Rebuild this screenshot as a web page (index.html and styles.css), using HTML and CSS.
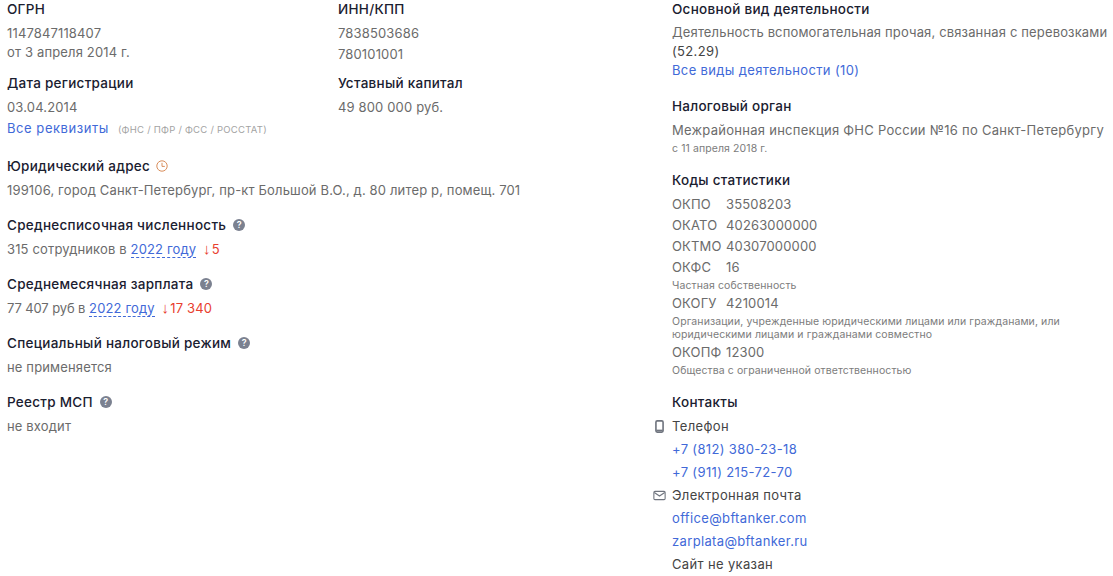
FILE: index.html
```
<!DOCTYPE html>
<html lang="ru">
<head>
<meta charset="utf-8">
<title>Реквизиты</title>
<link rel="stylesheet" href="styles.css">
</head>
<body>
<div class="page">
  <div class="left">
    <div class="pair">
      <div class="block col1">
        <h3>ОГРН</h3>
        <p>1147847118407</p>
        <p class="tight">от 3 апреля 2014 г.</p>
      </div>
      <div class="block">
        <h3>ИНН/КПП</h3>
        <p>7838503686</p>
        <p>780101001</p>
      </div>
    </div>
    <div class="pair">
      <div class="block col1">
        <h3>Дата регистрации</h3>
        <p>03.04.2014</p>
      </div>
      <div class="block">
        <h3>Уставный капитал</h3>
        <p>49 800 000 руб.</p>
      </div>
    </div>
    <p class="req"><a href="#">Все реквизиты</a><span class="srcs">(ФНС / ПФР / ФСС / РОССТАТ)</span></p>
    <div class="block">
      <h3>Юридический адрес<svg class="ico clock" viewBox="0 0 12 12"><circle cx="6" cy="6" r="5.2" fill="none" stroke="#d98e5c" stroke-width="1"/><path d="M6 2.8V6.4H8.8" fill="none" stroke="#d98e5c" stroke-width="1"/></svg></h3>
      <p>199106, город Санкт-Петербург, пр-кт Большой В.О., д. 80 литер р, помещ. 701</p>
    </div>
    <div class="block">
      <h3>Среднесписочная численность<span class="q">?</span></h3>
      <p>315 сотрудников в <a class="dash" href="#">2022 году</a> <span class="down"><span class="arr">↓</span>5</span></p>
    </div>
    <div class="block">
      <h3>Среднемесячная зарплата<span class="q">?</span></h3>
      <p><span class="narrow">77 407 руб в</span> <a class="dash" href="#">2022 году</a> <span class="down"><span class="arr">↓</span>17 340</span></p>
    </div>
    <div class="block">
      <h3>Специальный налоговый режим<span class="q">?</span></h3>
      <p>не применяется</p>
    </div>
    <div class="block">
      <h3>Реестр МСП<span class="q">?</span></h3>
      <p>не входит</p>
    </div>
  </div>
  <div class="right">
    <div class="block act">
      <h3>Основной вид деятельности</h3>
      <p>Деятельность вспомогательная прочая, связанная с перевозками</p>
      <p class="dark">(52.29)</p>
      <p><a href="#">Все виды деятельности (10)</a></p>
    </div>
    <div class="block">
      <h3>Налоговый орган</h3>
      <p class="wide">Межрайонная инспекция ФНС России №16 по Санкт-Петербургу</p>
      <small>с 11 апреля 2018 г.</small>
    </div>
    <div class="block">
      <h3>Коды статистики</h3>
      <p class="code"><span>ОКПО</span>35508203</p>
      <p class="code"><span>ОКАТО</span>40263000000</p>
      <p class="code"><span>ОКТМО</span>40307000000</p>
      <p class="code"><span>ОКФС</span>16</p>
      <small>Частная собственность</small>
      <p class="code"><span>ОКОГУ</span>4210014</p>
      <small class="wrap">Организации, учрежденные юридическими лицами или гражданами, или юридическими лицами и гражданами совместно</small>
      <p class="code"><span>ОКОПФ</span>12300</p>
      <small>Общества с ограниченной ответственностью</small>
    </div>
    <div class="block contacts">
      <h3>Контакты</h3>
      <p class="contact dark"><svg class="side" viewBox="0 0 12 12"><rect x="2.7" y="0.8" width="6.6" height="10.4" rx="1.2" fill="none" stroke="#70757f" stroke-width="1.5"/><path d="M3 9.6H9" stroke="#70757f" stroke-width="1.4"/></svg>Телефон</p>
      <p><a href="#">+7 (812) 380-23-18</a></p>
      <p><a href="#">+7 (911) 215-72-70</a></p>
      <p class="contact dark"><svg class="side" viewBox="0 0 12 12"><rect x="0.8" y="2.2" width="10.4" height="7.6" rx="1" fill="none" stroke="#70757f" stroke-width="1"/><path d="M1.2 3.2 6 6.5l4.8-3.3" fill="none" stroke="#70757f" stroke-width="1"/></svg>Электронная почта</p>
      <p><a href="#">office@bftanker.com</a></p>
      <p><a href="#">zarplata@bftanker.ru</a></p>
      <p class="dark">Сайт не указан</p>
    </div>
  </div>
</div>
</body>
</html>
```
FILE: styles.css
```
* { box-sizing: border-box; }
html, body { height: 576px; overflow: hidden; }
body { margin: 0; background: #fff; font-family: Inter, Roboto, "Noto Sans", sans-serif; font-size: 13px; letter-spacing: .15px; color: #6b6b6b; }
.page { display: flex; padding-left: 7px; }
.left { width: 665px; }
.right { width: 436px; }
.pair { display: flex; }
.pair .block { margin-bottom: 9px; }
.pair + .pair .block { margin-bottom: 0; }
.col1 { width: 331px; flex: none; }
.block { margin-bottom: 15px; }
.right .block { margin-bottom: 16px; }
h3 { display: flex; align-items: center; height: 18px; margin: 0 0 5px; font-size: 13.5px; font-weight: 500; letter-spacing: .27px; color: #1a2030; line-height: 18px; }
p { margin: 0; line-height: 21px; }
.tight { line-height: 17px; }
.wide { letter-spacing: .27px; }
.act { padding-bottom: 1px; }
.act p { line-height: 19px; }
a { color: #4169d8; text-decoration: none; letter-spacing: .35px; }
a.dash { border-bottom: 1px dashed #4169d8; letter-spacing: .15px; }
.narrow { letter-spacing: -.12px; }
.down { color: #e8402f; margin-left: 3px; }
.arr { font-family: "Liberation Sans", sans-serif; font-size: 15px; line-height: 1; margin-right: 1px; }
.srcs { font-size: 9.5px; letter-spacing: .25px; color: #a3a3a3; margin-left: 9px; }
.req { margin-bottom: 17px; }
.req a { letter-spacing: .55px; }
.q { display: block; flex: none; width: 12px; height: 12px; border-radius: 50%; background: #7b8190; color: #fff; font-size: 9px; font-weight: 600; letter-spacing: 0; text-align: center; line-height: 12px; margin-left: 7px; }
.ico { flex: none; width: 12px; height: 12px; margin-left: 6px; }
small { display: block; font-size: 10.5px; letter-spacing: .1px; line-height: 13px; color: #7c7c7c; margin: 1px 0; }
.code span { display: inline-block; width: 54px; }
.contacts h3 { margin-bottom: 4px; }
.contacts p { line-height: 23px; }
.contact { position: relative; }
.side { position: absolute; left: -19px; top: 5px; width: 13px; height: 13px; }
.dark { color: #444; letter-spacing: .35px; }
```
